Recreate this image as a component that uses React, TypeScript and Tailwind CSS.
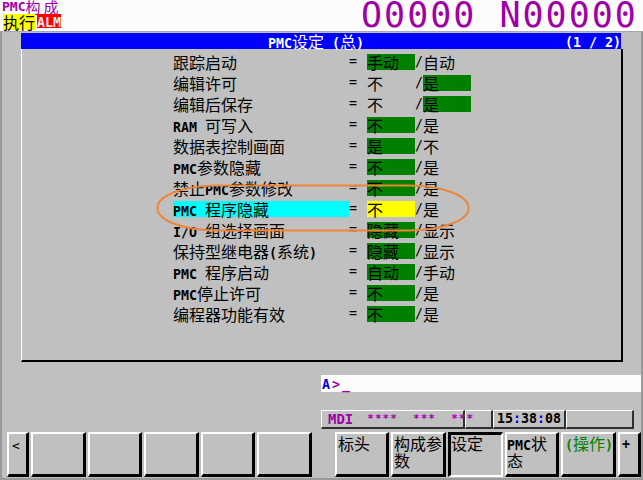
import React from "react";

const LAT = "font-['DejaVu_Sans_Mono',monospace] font-bold text-[13.3px] whitespace-pre";
const CJK = "font-['Noto_Sans_CJK_SC',sans-serif] text-[16px] whitespace-pre";

function T({ s }: { s: string }) {
  const runs = s.match(/[\x00-\x7f]+|[^\x00-\x7f]+/g) || [];
  return (
    <>
      {runs.map((r, i) =>
        /^[\x00-\x7f]/.test(r) ? (
          <span key={i} className={LAT}>
            {r}
          </span>
        ) : (
          <span key={i} className={CJK}>
            {r}
          </span>
        )
      )}
    </>
  );
}

type Row = { l: string; a: string; b: string; sel: number; hl?: boolean };

const rows: Row[] = [
  { l: "跟踪启动", a: "手动", b: "自动", sel: 0 },
  { l: "编辑许可", a: "不", b: "是", sel: 1 },
  { l: "编辑后保存", a: "不", b: "是", sel: 1 },
  { l: "RAM 可写入", a: "不", b: "是", sel: 0 },
  { l: "数据表控制画面", a: "是", b: "不", sel: 0 },
  { l: "PMC参数隐藏", a: "不", b: "是", sel: 0 },
  { l: "禁止PMC参数修改", a: "不", b: "是", sel: 0 },
  { l: "PMC 程序隐藏", a: "不", b: "是", sel: 0, hl: true },
  { l: "I/O 组选择画面", a: "隐藏", b: "显示", sel: 0 },
  { l: "保持型继电器(系统)", a: "隐藏", b: "显示", sel: 0 },
  { l: "PMC 程序启动", a: "自动", b: "手动", sel: 0 },
  { l: "PMC停止许可", a: "不", b: "是", sel: 0 },
  { l: "编程器功能有效", a: "不", b: "是", sel: 0 },
];

function Key({
  children,
  w,
  pressed,
}: {
  children?: React.ReactNode;
  w: string;
  pressed?: boolean;
}) {
  return (
    <div
      className={
        w +
        " h-[45px] box-border leading-[17px] text-black " +
        (pressed
          ? "border-t-[3px] border-l-[3px] border-b-2 border-r-2 border-t-black border-l-black border-b-white border-r-white"
          : "border-t-2 border-l-2 border-b-[3px] border-r-[3px] border-t-white border-l-white border-b-black border-r-black")
      }
    >
      {children}
    </div>
  );
}

function StatBox({ w, children }: { w: string; children?: React.ReactNode }) {
  return (
    <div
      className={
        w +
        " h-[19px] box-border border-t border-l border-b-2 border-r-2 border-t-white border-l-white border-b-[#303030] border-r-[#303030] flex items-center leading-[16px]"
      }
    >
      {children}
    </div>
  );
}

export default function App() {
  return (
    <div className="relative w-[643px] h-[480px] overflow-hidden bg-[#c0c0c0] flex flex-col">
      {/* header */}
      <div className="h-[32px] bg-[#fcfcfc] border-b border-[#a8a8a8] flex box-border">
        <div className="w-[361px] flex flex-col">
          <div className="h-[14px] leading-[13px] pl-[2px] text-[#a000a8] whitespace-nowrap flex items-start">
            <span className="font-['DejaVu_Sans_Mono',monospace] font-bold text-[13px] leading-[13px]">PMC</span>
            <span className="font-['Noto_Sans_CJK_SC',sans-serif] text-[15px] leading-[13px] tracking-[3px]">构成</span>
          </div>
          <div className="flex items-start pl-[3px] gap-[2px]">
            <div className="w-[32px] h-[16px] bg-[#ffff00] leading-[16px] text-black">
              <span className={CJK}>执行</span>
            </div>
            <div className="w-[24px] h-[14px] bg-[#ff0000] leading-[14px] text-[#e8e8e8]">
              <span className={LAT}>ALM</span>
            </div>
          </div>
        </div>
        <div className="h-[31px] leading-[31px] font-['DejaVu_Sans_Mono',monospace] text-[35px] tracking-[2px] text-[#a000a8] whitespace-pre">
          O0000 N00000
        </div>
      </div>

      {/* body */}
      <div className="flex-1 box-border border-l-2 border-r-2 border-b-2 border-[#9a9a9a] flex flex-col">
        {/* title bar */}
        <div className="ml-[19px] w-[600px] h-[16px] bg-[#0000ff] text-white flex leading-[16px] mt-[1px]">
          <div className="pl-[247px] flex-1 whitespace-nowrap">
            <T s="PMC设定 (总)" />
          </div>
          <div className="whitespace-nowrap">
            <span className={LAT}>(1 / 2)</span>
          </div>
        </div>
        {/* panel */}
        <div className="ml-[19px] w-[602px] h-[313px] box-border border-l border-l-white border-r-2 border-r-black border-b-2 border-b-black pt-[5px] pl-[151px] text-black">
          {rows.map((r, i) => (
            <div key={i} className="flex items-start h-[21px]">
              <div
                className={
                  "w-[176px] h-[16px] leading-[16px] whitespace-nowrap " +
                  (r.hl ? "bg-[#00ffff]" : "")
                }
              >
                <T s={r.l} />
              </div>
              <div className="w-[18px] h-[16px] leading-[16px] font-['DejaVu_Sans_Mono',monospace] text-[13.3px]">
                =
              </div>
              <div
                className={
                  "w-[48px] h-[16px] leading-[16px] whitespace-nowrap " +
                  (r.sel === 0 ? (r.hl ? "bg-[#ffff00]" : "bg-[#008000]") : "")
                }
              >
                <T s={r.a} />
              </div>
              <div className="w-[8px] h-[16px] leading-[16px] font-['DejaVu_Sans_Mono',monospace] text-[13.3px]">
                /
              </div>
              <div
                className={
                  "w-[48px] h-[16px] leading-[16px] whitespace-nowrap " +
                  (r.sel === 1 ? "bg-[#008000]" : "")
                }
              >
                <T s={r.b} />
              </div>
            </div>
          ))}
        </div>

        {/* input line */}
        <div className="mt-[13px] ml-[319px] h-[17px] w-[320px] bg-[#fcfcfc] leading-[17px] pl-[1px] tracking-[2px] whitespace-pre">
          <span className={LAT + " text-[#0000e0]"}>A</span>
          <span className={LAT + " text-[#a000a8]"}>{">_"}</span>
        </div>

        {/* status bar */}
        <div className="mt-[18px] ml-[319px] flex items-start">
          <StatBox w="w-[144px]">
            <span className={LAT + " text-[#a000a8] ml-[6px] text-[14px]"}>MDI</span>
            <span className="font-['DejaVu_Sans_Mono',monospace] font-bold text-[11px] text-[#a000a8] ml-[14px] whitespace-pre tracking-[1px]">
              {"****  ***  ***"}
            </span>
          </StatBox>
          <StatBox w="w-[28px]" />
          <StatBox w="w-[73px]">
            <span className={LAT + " ml-[3px] text-black"}>
              15<span className="text-[#0000e0]">:</span>38
              <span className="text-[#0000e0]">:</span>08
            </span>
          </StatBox>
          <StatBox w="w-[68px]" />
        </div>

        {/* soft keys */}
        <div className="mt-[3px] flex items-start">
          <div className="ml-[5px]">
            <Key w="w-[22px]">
              <div className="pl-[3px] pt-[4px] font-['DejaVu_Sans_Mono',monospace] text-[13px] leading-[16px]">&lt;</div>
            </Key>
          </div>
          <div className="ml-[2px] flex gap-[2px]">
            <Key w="w-[55px]" />
            <Key w="w-[54px]" />
            <Key w="w-[55px]" />
            <Key w="w-[54px]" />
            <Key w="w-[55px]" />
          </div>
          <div className="ml-[23px] flex gap-[2px]">
            <Key w="w-[54px]">
              <div className="pl-[1px] pt-[1px]">
                <T s="标头" />
              </div>
            </Key>
            <Key w="w-[55px]">
              <div className="pl-[1px] pt-[1px] flex flex-col">
                <div className="h-[17px] leading-[17px]"><T s="构成参" /></div>
                <div className="h-[17px] leading-[17px]"><T s="数" /></div>
              </div>
            </Key>
            <Key w="w-[55px]" pressed>
              <div className="pt-[0px]">
                <T s="设定" />
              </div>
            </Key>
            <Key w="w-[54px]">
              <div className="pt-[1px] flex flex-col">
                <div className="h-[17px] leading-[17px]"><T s="PMC状" /></div>
                <div className="h-[17px] leading-[17px]"><T s="态" /></div>
              </div>
            </Key>
            <Key w="w-[55px]">
              <div className="pl-[2px] pt-[1px] text-[#008000]">
                <T s="(操作)" />
              </div>
            </Key>
            <Key w="w-[23px]">
              <div className="pl-[2px] pt-[1px]">
                <span className={LAT}>+</span>
              </div>
            </Key>
          </div>
        </div>
      </div>

      {/* annotation */}
      <svg
        className="absolute left-[156px] top-[184px]"
        width="314"
        height="48"
        viewBox="0 0 314 48"
      >
        <rect
          x="1.5"
          y="1.5"
          width="311"
          height="45"
          rx="60"
          ry="22"
          fill="none"
          stroke="#f08434"
          strokeWidth="2"
        />
      </svg>
    </div>
  );
}
